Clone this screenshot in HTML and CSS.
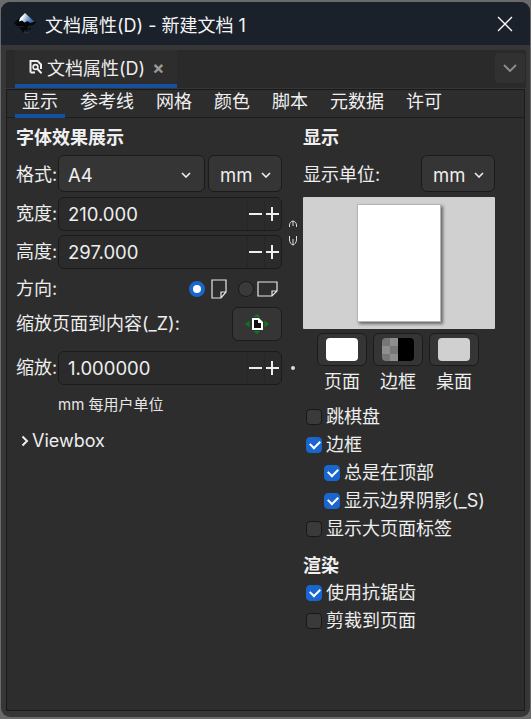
FILE: index.html
```html
<!DOCTYPE html>
<html lang="zh-CN">
<head>
<meta charset="utf-8">
<title>文档属性(D) - 新建文档 1</title>
<link rel="stylesheet" href="styles.css">
</head>
<body>
<div class="window">
  <header class="titlebar">
    <svg class="logo" viewBox="0 0 24 24" width="24" height="24">
      <defs>
        <linearGradient id="lg" x1="0" y1="0" x2="1" y2="0.300">
          <stop offset="0.300" stop-color="#ffffff"/>
          <stop offset="0.650" stop-color="#7fa6d8"/>
          <stop offset="1" stop-color="#2e5f9e"/>
        </linearGradient>
      </defs>
      <path d="M12 1 L23 10.500 L20 13 L16 13.500 L14 15.500 L9 14 L4 14 L1 11 Z" fill="#050608"/>
      <path d="M12 1 L21.500 9.500 L17.500 11 L14.500 9 L11.500 10.500 L9 8.500 L6 9.500 L7 6 Z" fill="url(#lg)"/>
      <path d="M6 15 H13 L15.500 16.500 L14 19 L11.500 18 L10 21 L8.500 18 Z" fill="#07080a"/>
      <circle cx="17" cy="17" r="1" fill="#07080a"/>
      <path d="M11 20 H16 V21.500 H11 Z" fill="#2b3038"/>
    </svg>
    <span class="title">文档属性(D) - 新建文档 1</span>
    <svg class="close" viewBox="0 0 16 16" width="16" height="16"><path d="M1 1 L15 15 M15 1 L1 15" stroke="#fff" stroke-width="1.300" fill="none"/></svg>
  </header>
  <div class="dock">
    <div class="dock-tabs">
      <div class="dock-tab">
        <svg class="doc-icon" viewBox="0 0 14 14" width="14" height="14">
          <path d="M1.500 12.500 V1 H8.500 L12 4.500 V9" fill="none" stroke="#eeeeee" stroke-width="2"/>
          <path d="M1.500 12.500 H6" fill="none" stroke="#eeeeee" stroke-width="2"/>
          <circle cx="6.500" cy="7" r="2.400" fill="none" stroke="#eeeeee" stroke-width="1.600"/>
          <path d="M8 8.500 L12.500 13.200" stroke="#eeeeee" stroke-width="2"/>
        </svg>
        <span>文档属性(D)</span>
        <span class="tab-x">×</span>
      </div>
      <div class="dock-menu">
        <svg viewBox="0 0 14 8" width="14" height="8"><path d="M1 1 L7 7 L13 1" stroke="#8a8a8a" stroke-width="2" fill="none"/></svg>
      </div>
    </div>
    <div class="panel">
      <nav class="subtabs">
        <span class="subtab active">显示</span>
        <span class="subtab">参考线</span>
        <span class="subtab">网格</span>
        <span class="subtab">颜色</span>
        <span class="subtab">脚本</span>
        <span class="subtab">元数据</span>
        <span class="subtab">许可</span>
      </nav>
      <div class="content">
        <section class="left">
          <h2 class="heading">字体效果展示</h2>
          <div class="row row-format">
            <label class="lbl">格式:</label>
            <div class="btn select grow"><span>A4</span><svg class="chev" viewBox="0 0 10 6" width="10" height="6"><path d="M1 1 L5 5 L9 1" stroke="#eee" stroke-width="1.600" fill="none"/></svg></div>
            <div class="btn select unit"><span>mm</span><svg class="chev" viewBox="0 0 10 6" width="10" height="6"><path d="M1 1 L5 5 L9 1" stroke="#eee" stroke-width="1.600" fill="none"/></svg></div>
          </div>
          <div class="linked">
            <div class="linked-rows">
              <div class="row">
                <label class="lbl">宽度:</label>
                <div class="spin"><span class="val">210.000</span><span class="sb minus"></span><span class="sb plus"></span></div>
              </div>
              <div class="row">
                <label class="lbl">高度:</label>
                <div class="spin"><span class="val">297.000</span><span class="sb minus"></span><span class="sb plus"></span></div>
              </div>
            </div>
            <svg class="link" viewBox="0 0 10 26" width="10" height="26">
              <path d="M1.500 7 V5 C1.500 3 3.500 1 5 1 C6.500 1 8.500 3 8.500 5 V7 M5 1 V6" stroke="#dddddd" stroke-width="1" fill="none"/>
              <path d="M1.500 16 V20 C1.500 22 3.500 25 5 25 C6.500 25 8.500 22 8.500 20 V16 M5 25 V19" stroke="#dddddd" stroke-width="1" fill="none"/>
            </svg>
          </div>
          <div class="row row-orient">
            <label class="lbl">方向:</label>
            <div class="orient">
              <span class="radio on"></span>
              <svg viewBox="0 0 16 20" width="16" height="20"><path d="M1 1 H15 V13 L10 19 H1 Z M15 13 H10 V19" fill="none" stroke="#e6e6e6" stroke-width="1.200"/></svg>
              <span class="radio off"></span>
              <svg viewBox="0 0 21 16" width="21" height="16"><path d="M1 1 H20 V10 L15 15 H1 Z M20 10 H15 V15" fill="none" stroke="#e6e6e6" stroke-width="1.200"/></svg>
            </div>
          </div>
          <div class="row row-fit">
            <label class="lbl">缩放页面到内容(_Z):</label>
            <div class="btn fit">
              <svg viewBox="0 0 24 20" width="24" height="20">
                <path d="M12 0 L15.500 3 H8.500 Z M12 20 L8.500 17 H15.500 Z M0 10 L4.500 6.500 V13.500 Z M24 10 L19.500 13.500 V6.500 Z" fill="#0b7a1b"/>
                <path d="M8 5 H13.500 L17 8.500 V15 H8 Z" fill="#111" stroke="#ffffff" stroke-width="2"/>
                <path d="M13 5 L17 9 H13 Z" fill="#ffffff"/>
              </svg>
            </div>
          </div>
          <div class="scale-wrap">
            <div class="row">
              <label class="lbl">缩放:</label>
              <div class="spin"><span class="val">1.000000</span><span class="sb minus"></span><span class="sb plus"></span></div>
            </div>
            <span class="dot"></span>
          </div>
          <p class="note">mm 每用户单位</p>
          <div class="expander">
            <svg viewBox="0 0 8 12" width="8" height="12"><path d="M1.500 1.500 L6 6 L1.500 10.500" stroke="#eee" stroke-width="2" fill="none"/></svg>
            <span>Viewbox</span>
          </div>
        </section>
        <section class="right">
          <h2 class="heading">显示</h2>
          <div class="row row-unit">
            <label class="lbl">显示单位:</label>
            <div class="btn select unit-r"><span>mm</span><svg class="chev" viewBox="0 0 10 6" width="10" height="6"><path d="M1 1 L5 5 L9 1" stroke="#eee" stroke-width="1.600" fill="none"/></svg></div>
          </div>
          <div class="preview"><div class="page"></div></div>
          <div class="swatches">
            <div class="swatch-col"><div class="btn swatch"><span class="chip chip-page"></span></div><span>页面</span></div>
            <div class="swatch-col"><div class="btn swatch"><span class="chip chip-border"></span></div><span>边框</span></div>
            <div class="swatch-col"><div class="btn swatch"><span class="chip chip-desk"></span></div><span>桌面</span></div>
          </div>
          <div class="checks">
            <div class="check"><span class="box"></span>跳棋盘</div>
            <div class="check"><span class="box on"></span>边框</div>
            <div class="check sub"><span class="box on"></span>总是在顶部</div>
            <div class="check sub"><span class="box on"></span>显示边界阴影(_S)</div>
            <div class="check"><span class="box"></span>显示大页面标签</div>
          </div>
          <h2 class="heading h-render">渲染</h2>
          <div class="checks">
            <div class="check"><span class="box on"></span>使用抗锯齿</div>
            <div class="check"><span class="box"></span>剪裁到页面</div>
          </div>
        </section>
      </div>
    </div>
  </div>
</div>
</body>
</html>
```
FILE: styles.css
```css
* { box-sizing: border-box; }
html, body { height: 100%; }
body {
  margin: 0;
  padding: 2px 1px 2px 1px;
  background: #6a6a6a;
  font-family: "Inter", "Noto Sans CJK SC", sans-serif;
  font-size: 18px;
  color: #eeeeee;
  overflow: hidden;
}
.window {
  height: 715px;
  background: #363636;
  border-radius: 9px;
  overflow: hidden;
  display: flex;
  flex-direction: column;
}
.titlebar {
  height: 43px;
  flex: none;
  background: #1a212b;
  display: flex;
  align-items: center;
  padding: 0 17px 0 12px;
}
.logo { flex: none; }
.title { margin-left: 8px; flex: 1; color: #f4f4f4; white-space: nowrap; }
.close { flex: none; }
.dock {
  flex: 1;
  display: flex;
  flex-direction: column;
  padding: 5px 4px 6px 5px;
  min-height: 0;
}
.dock-tabs {
  height: 38px;
  flex: none;
  background: #2a2a2a;
  display: flex;
  align-items: stretch;
  justify-content: space-between;
  padding-left: 9px;
}
.dock-tab {
  width: 162px;
  background: #2d2d2d;
  border-bottom: 4px solid #17509a;
  display: flex;
  align-items: center;
  padding-left: 14px;
  gap: 4px;
  font-size: 18px;
  white-space: nowrap;
}
.tab-x { color: #999; margin-left: 3px; font-size: 18px; font-weight: 700; }
.doc-icon { flex: none; }
.dock-menu {
  width: 30px;
  height: 30px;
  margin: 3px 1px 0 0;
  border-radius: 4px;
  background: #313131;
  display: flex;
  align-items: center;
  justify-content: center;
}
.panel {
  flex: 1;
  min-height: 0;
  border: 1px solid #1a1a1a;
  background: #2d2d2d;
  margin-right: 1px;
  margin-top: 1px;
}
.subtabs {
  height: 28px;
  display: flex;
  border-bottom: 1px solid #1c1c1c;
  padding-left: 8px;
  gap: 22px;
  align-items: stretch;
}
.subtab {
  line-height: 24px;
  white-space: nowrap;
  color: #f0f0f0;
}
.subtab.active { padding: 0 7px; margin-right: -7px; border-bottom: 4px solid #17509a; height: 28px; width: 50px; text-align: center; }
.content {
  display: flex;
  padding: 8px 0 0 9px;
}
.left { width: 287px; flex: none; }
.right { width: 192px; flex: none; }
.heading {
  margin: 0;
  font-size: 18px;
  line-height: 24px;
  font-weight: 700;
  color: #f0f0f0;
}
.row { display: flex; align-items: center; }
.lbl { white-space: nowrap; color: #eeeeee; line-height: 24px; }
.btn {
  background: #353535;
  border: 1px solid #1b1b1b;
  border-radius: 6px;
}
.select {
  height: 37px;
  display: flex;
  align-items: center;
  justify-content: space-between;
  padding: 2px 13px 0 9px;
  font-size: 18.500px;
}
.left .row { width: 266px; }
.row-format { margin-top: 5px; gap: 3px; }
.row-format .lbl, .row-unit .lbl { padding-top: 2px; }
.row-format .lbl { width: 39px; flex: none; }
.grow { width: 147px; flex: none; }
.unit { width: 74px; flex: none; padding: 2px 10px 0 11px; }
.unit-r { width: 74px; flex: none; padding: 2px 10px 0 11px; margin-left: auto; }
.linked { display: flex; align-items: center; margin-top: 5px; }
.linked-rows { display: flex; flex-direction: column; gap: 4px; width: 266px; flex: none; }
.link { margin-left: 6px; flex: none; }
.spin {
  width: 224px;
  height: 34px;
  margin-left: auto;
  background: #2b2b2b;
  border: 1px solid #1b1b1b;
  border-radius: 6px;
  display: flex;
  align-items: center;
}
.val { flex: 1; padding-left: 9px; font-size: 18.500px; }
.sb {
  width: 17px;
  height: 32px;
  position: relative;
  border-left: 1px solid #262626;
}
.sb::before {
  content: "";
  position: absolute;
  left: 1px;
  right: 2px;
  top: 15px;
  height: 2px;
  background: #eeeeee;
}
.plus::after {
  content: "";
  position: absolute;
  left: 6px;
  top: 9px;
  width: 2px;
  height: 14px;
  background: #eeeeee;
}
.row-orient { margin-top: 8px; height: 24px; justify-content: space-between; }
.orient { display: flex; align-items: center; margin-right: 4px; }
.radio { width: 16px; height: 16px; border-radius: 50%; display: block; }
.radio.on { background: #fff; border: 4px solid #1a66cf; }
.radio.off { background: #3a3a3a; border: 1px solid #1a1a1a; margin-left: 11px; margin-right: 3px; }
.radio.on + svg { margin-left: 6px; }
.row-fit { margin-top: 6px; justify-content: space-between; }
.fit {
  width: 50px;
  height: 34px;
  display: flex;
  align-items: center;
  justify-content: center;
}
.scale-wrap { display: flex; align-items: center; margin-top: 10px; }
.dot { width: 4px; height: 4px; border-radius: 50%; background: #ddd; margin-left: 9px; flex: none; }
.note { margin: 9px 0 0 42px; font-size: 15px; line-height: 22px; color: #e6e6e6; }
.expander { display: flex; align-items: center; margin-top: 12px; padding-left: 5px; gap: 3px; line-height: 26px; }
.row-unit { margin-top: 5px; }
.preview {
  height: 132px;
  margin-top: 5px;
  background: #d0d0d0;
  border-radius: 1px;
  padding-top: 7px;
  display: flex;
  justify-content: center;
}
.page {
  width: 84px;
  height: 118px;
  background: #fff;
  border: 1px solid #b5b5b5;
  box-shadow: 2px 2px 3px #666;
}
.swatches { display: flex; gap: 6px; margin-top: 4px; margin-left: 14px; }
.swatch-col { display: flex; flex-direction: column; align-items: center; width: 50px; line-height: 24px; gap: 4px; }
.swatch {
  width: 50px;
  height: 33px;
  display: flex;
  align-items: center;
  justify-content: center;
}
.chip { width: 32px; height: 23px; border-radius: 4px; display: block; }
.chip-page { background: #fff; }
.chip-desk { background: #d0d0d0; }
.chip-border {
  background:
    linear-gradient(90deg, transparent 50%, #000 50%),
    conic-gradient(#8e8e8e 25%, #777 0 50%, #8e8e8e 0 75%, #777 0) 0 0 / 16px 16px;
}
.checks { display: flex; flex-direction: column; gap: 6px; margin-top: 12px; padding-left: 4px; }
.check { display: flex; align-items: center; gap: 4px; height: 22px; line-height: 22px; white-space: nowrap; color: #eeeeee; }
.check.sub { padding-left: 18px; }
.box {
  width: 16px;
  height: 16px;
  border-radius: 4px;
  background: #3a3a3a;
  border: 1px solid #181818;
  flex: none;
  display: block;
  position: relative;
  left: -1px;
  margin-right: -1px;
}
.box.on { background: #1a66cf; border-color: #1a66cf; }
.box.on::after {
  content: "";
  position: absolute;
  left: 3px;
  top: 2px;
  width: 8px;
  height: 5px;
  border-left: 2.500px solid #fff;
  border-bottom: 2.500px solid #fff;
  transform: rotate(-45deg);
}
.h-render { margin-top: 14px; }
.h-render + .checks { margin-top: 4px; }
```
